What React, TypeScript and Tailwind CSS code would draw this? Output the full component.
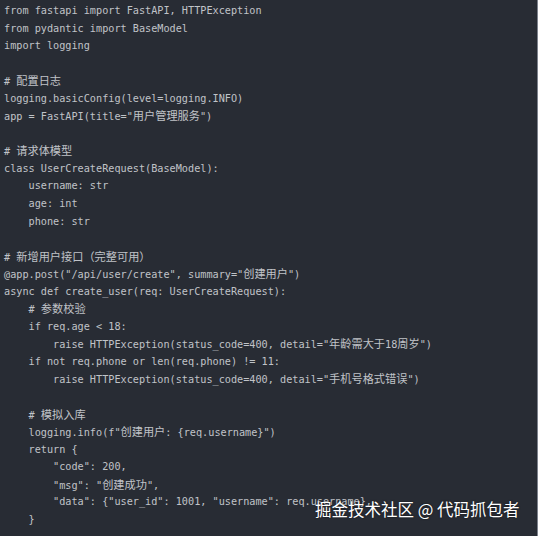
import React from "react";

const lines: string[] = [
  "from fastapi import FastAPI, HTTPException",
  "from pydantic import BaseModel",
  "import logging",
  "",
  "# 配置日志",
  "logging.basicConfig(level=logging.INFO)",
  'app = FastAPI(title="用户管理服务")',
  "",
  "# 请求体模型",
  "class UserCreateRequest(BaseModel):",
  "    username: str",
  "    age: int",
  "    phone: str",
  "",
  "# 新增用户接口（完整可用）",
  '@app.post("/api/user/create", summary="创建用户")',
  "async def create_user(req: UserCreateRequest):",
  "    # 参数校验",
  "    if req.age < 18:",
  '        raise HTTPException(status_code=400, detail="年龄需大于18周岁")',
  "    if not req.phone or len(req.phone) != 11:",
  '        raise HTTPException(status_code=400, detail="手机号格式错误")',
  "",
  "    # 模拟入库",
  '    logging.info(f"创建用户: {req.username}")',
  "    return {",
  '        "code": 200,',
  '        "msg": "创建成功",',
  '        "data": {"user_id": 1001, "username": req.username},',
  "    }",
];

function renderLine(s: string) {
  const parts = s.split(/([\u3000-\u9fff\uff00-\uffef]+)/);
  return parts.map((p, i) =>
    i % 2 === 1 ? (
      <span
        key={i}
        className="text-[11.2px] font-['Noto_Sans_CJK_SC',sans-serif]"
      >
        {p}
      </span>
    ) : (
      <span key={i}>{p}</span>
    )
  );
}

export default function App() {
  return (
    <div className="relative w-[538px] h-[536px] overflow-hidden bg-[#282c34] border-r border-[#7d828c]">
      <pre className="pl-[4px] pt-[2px] m-0 font-['DejaVu_Sans_Mono',monospace] text-[10.2px] leading-[17.55px] text-[#c0c3c8] whitespace-pre">
        {lines.map((l, i) => (
          <div key={i} className="h-[17.55px]">
            {l === "" ? "\u00a0" : renderLine(l)}
          </div>
        ))}
      </pre>
      <div className="absolute left-[315px] top-[501px] text-[16.5px] leading-none text-white font-['Noto_Sans_CJK_SC',sans-serif] whitespace-nowrap [text-shadow:0_0_2px_rgba(0,0,0,0.6)]">
        掘金技术社区 @ 代码抓包者
      </div>
    </div>
  );
}
